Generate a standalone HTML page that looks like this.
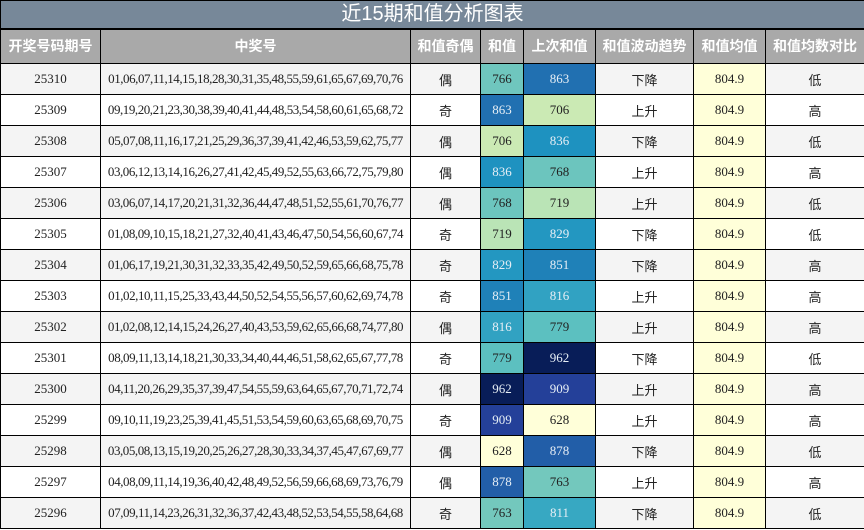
<!DOCTYPE html>
<html><head><meta charset="utf-8"><style>
*{margin:0;padding:0;box-sizing:border-box}
body{width:864px;height:530px;background:#fff;overflow:hidden;font-family:"Liberation Serif","Noto Serif CJK SC",serif}
table{border-collapse:collapse;table-layout:fixed;width:864px}
td,th{border:1px solid #000;text-align:center;white-space:nowrap;overflow:hidden}
.t td{height:28px;background:#778899;color:#fff;font:20px/26px "Liberation Sans","Noto Sans CJK SC",sans-serif;border-bottom:2px solid #000}
th{height:35px;background:#a9a9a9;color:#fff;font:bold 14px "Liberation Sans","Noto Sans CJK SC",sans-serif}
tr.r td{height:31px;font-size:13px;color:#222}
tr.r:nth-child(odd) td{background:#f4f4f4}
tr.r:nth-child(even) td{background:#fff}
td.z{font-family:"Liberation Sans","Noto Sans CJK SC",sans-serif;font-size:14px}
td.a{background:#ffffd9 !important;font-size:12px}
td.v{font-size:13px}
td.w{color:#e6eef5 !important}
td.n{font-size:12px;letter-spacing:-0.45px}
</style></head><body>
<table>
<colgroup><col style="width:100px"><col style="width:310px"><col style="width:70px"><col style="width:43px"><col style="width:72px"><col style="width:98px"><col style="width:72px"><col style="width:99px"></colgroup>
<tr class="t"><td colspan="8">近15期和值分析图表</td></tr>
<tr><th>开奖号码期号</th><th>中奖号</th><th>和值奇偶</th><th>和值</th><th>上次和值</th><th>和值波动趋势</th><th>和值均值</th><th>和值均数对比</th></tr>
<tr class="r"><td>25310</td><td class="n">01,06,07,11,14,15,18,28,30,31,35,48,55,59,61,65,67,69,70,76</td><td class="z">偶</td><td class="v" style="background:#6fc6be">766</td><td class="v w" style="background:#2170b1">863</td><td class="z">下降</td><td class="a">804.9</td><td class="z">低</td></tr>
<tr class="r"><td>25309</td><td class="n">09,19,20,21,23,30,38,39,40,41,44,48,53,54,58,60,61,65,68,72</td><td class="z">奇</td><td class="v w" style="background:#2170b1">863</td><td class="v" style="background:#cbeab4">706</td><td class="z">上升</td><td class="a">804.9</td><td class="z">高</td></tr>
<tr class="r"><td>25308</td><td class="n">05,07,08,11,16,17,21,25,29,36,37,39,41,42,46,53,59,62,75,77</td><td class="z">偶</td><td class="v" style="background:#cbeab4">706</td><td class="v w" style="background:#1e92c0">836</td><td class="z">下降</td><td class="a">804.9</td><td class="z">低</td></tr>
<tr class="r"><td>25307</td><td class="n">03,06,12,13,14,16,26,27,41,42,45,49,52,55,63,66,72,75,79,80</td><td class="z">偶</td><td class="v w" style="background:#1e92c0">836</td><td class="v" style="background:#6cc5be">768</td><td class="z">上升</td><td class="a">804.9</td><td class="z">高</td></tr>
<tr class="r"><td>25306</td><td class="n">03,06,07,14,17,20,21,31,32,36,44,47,48,51,52,55,61,70,76,77</td><td class="z">偶</td><td class="v" style="background:#6cc5be">768</td><td class="v" style="background:#bae4b6">719</td><td class="z">上升</td><td class="a">804.9</td><td class="z">低</td></tr>
<tr class="r"><td>25305</td><td class="n">01,08,09,10,15,18,21,27,32,40,41,43,46,47,50,54,56,60,67,74</td><td class="z">奇</td><td class="v" style="background:#bae4b6">719</td><td class="v w" style="background:#2397c1">829</td><td class="z">下降</td><td class="a">804.9</td><td class="z">低</td></tr>
<tr class="r"><td>25304</td><td class="n">01,06,17,19,21,30,31,32,33,35,42,49,50,52,59,65,66,68,75,78</td><td class="z">奇</td><td class="v w" style="background:#2397c1">829</td><td class="v w" style="background:#1f81b8">851</td><td class="z">下降</td><td class="a">804.9</td><td class="z">高</td></tr>
<tr class="r"><td>25303</td><td class="n">01,02,10,11,15,25,33,43,44,50,52,54,55,56,57,60,62,69,74,78</td><td class="z">奇</td><td class="v w" style="background:#1f81b8">851</td><td class="v w" style="background:#31a2c2">816</td><td class="z">上升</td><td class="a">804.9</td><td class="z">高</td></tr>
<tr class="r"><td>25302</td><td class="n">01,02,08,12,14,15,24,26,27,40,43,53,59,62,65,66,68,74,77,80</td><td class="z">偶</td><td class="v w" style="background:#31a2c2">816</td><td class="v" style="background:#5cc0c0">779</td><td class="z">上升</td><td class="a">804.9</td><td class="z">高</td></tr>
<tr class="r"><td>25301</td><td class="n">08,09,11,13,14,18,21,30,33,34,40,44,46,51,58,62,65,67,77,78</td><td class="z">奇</td><td class="v" style="background:#5cc0c0">779</td><td class="v w" style="background:#081d58">962</td><td class="z">下降</td><td class="a">804.9</td><td class="z">低</td></tr>
<tr class="r"><td>25300</td><td class="n">04,11,20,26,29,35,37,39,47,54,55,59,63,64,65,67,70,71,72,74</td><td class="z">偶</td><td class="v w" style="background:#081d58">962</td><td class="v w" style="background:#244099">909</td><td class="z">上升</td><td class="a">804.9</td><td class="z">高</td></tr>
<tr class="r"><td>25299</td><td class="n">09,10,11,19,23,25,39,41,45,51,53,54,59,60,63,65,68,69,70,75</td><td class="z">奇</td><td class="v w" style="background:#244099">909</td><td class="v" style="background:#ffffd9">628</td><td class="z">上升</td><td class="a">804.9</td><td class="z">高</td></tr>
<tr class="r"><td>25298</td><td class="n">03,05,08,13,15,19,20,25,26,27,28,30,33,34,37,45,47,67,69,77</td><td class="z">偶</td><td class="v" style="background:#ffffd9">628</td><td class="v w" style="background:#225ea8">878</td><td class="z">下降</td><td class="a">804.9</td><td class="z">低</td></tr>
<tr class="r"><td>25297</td><td class="n">04,08,09,11,14,19,36,40,42,48,49,52,56,59,66,68,69,73,76,79</td><td class="z">偶</td><td class="v w" style="background:#225ea8">878</td><td class="v" style="background:#73c8bd">763</td><td class="z">上升</td><td class="a">804.9</td><td class="z">高</td></tr>
<tr class="r"><td>25296</td><td class="n">07,09,11,14,23,26,31,32,36,37,42,43,48,52,53,54,55,58,64,68</td><td class="z">奇</td><td class="v" style="background:#73c8bd">763</td><td class="v w" style="background:#37a8c2">811</td><td class="z">下降</td><td class="a">804.9</td><td class="z">低</td></tr>
</table>
</body></html>
